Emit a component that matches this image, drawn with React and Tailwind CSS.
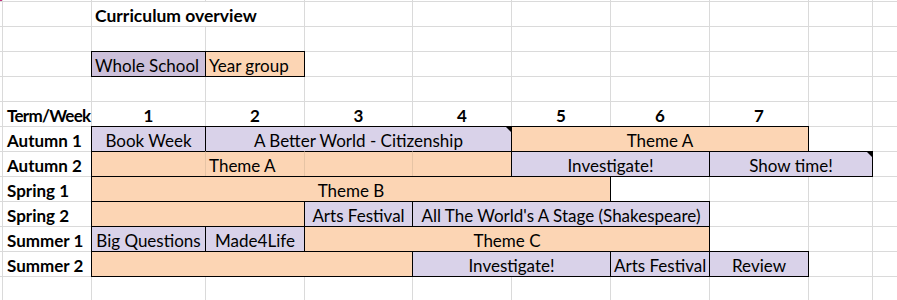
import React from "react";

const SPAN = {
  1: "",
  2: "col-span-2",
  3: "col-span-3",
  4: "col-span-4",
  5: "col-span-5",
};

const FILL = {
  p: "bg-[#fcd5b4]",
  u: "bg-[#d9d2e9]",
  w: "bg-[#ccc0da]",
};

const ALIGN = {
  c: "justify-center",
  l: "justify-start pl-[3px]",
  r: "justify-end",
};

function Cell({ span = 1, fill, align = "l", bold, text, tri, extra = "" }) {
  const filled = !!fill;
  const cls = [
    "flex items-end pb-[2px] leading-none whitespace-nowrap min-w-0",
    SPAN[span],
    filled ? "relative -m-px border border-black" : "bg-white",
    filled ? FILL[fill] : "",
    ALIGN[align],
    bold ? "font-bold" : "",
    extra,
  ].join(" ");
  return (
    <div className={cls}>
      {text}
      {tri && (
        <span className="absolute top-0 right-0 w-0 h-0 border-l-[5px] border-l-transparent border-t-[5px] border-t-black" />
      )}
    </div>
  );
}

function Empty({ n = 1 }) {
  return Array.from({ length: n }).map((_, i) => <div key={i} className="bg-white" />);
}

function Label({ text, extra = "" }) {
  return (
    <div className={"flex items-end pb-[2px] pl-[4px] leading-none whitespace-nowrap bg-white font-bold " + extra}>
      {text}
    </div>
  );
}

export default function App() {
  return (
    <div className="w-[897px] h-[300px] overflow-hidden bg-white">
      <div className="grid grid-cols-[2px_88px_113px_98px_107px_98px_98px_98px_98px_63px_1fr] grid-rows-[1px_repeat(12,24px)] gap-px bg-[#dadada] text-[17px] text-black font-[family-name:Lato,sans-serif]">
        {/* row 0 */}
        <div className="bg-[#c2307e]" />
        <Empty n={10} />

        {/* row 1 */}
        <div className="bg-white" />
        <div className="bg-white" />
        <Cell span={2} bold text="Curriculum overview" extra="bg-white text-[17.5px]" />
        <Empty n={7} />

        {/* row 2 */}
        <Empty n={11} />

        {/* row 3 */}
        <Empty n={2} />
        <Cell fill="w" text="Whole School" />
        <Cell fill="p" text="Year group" />
        <Empty n={7} />

        {/* row 4 */}
        <Empty n={11} />

        {/* row 5 */}
        <div className="bg-white" />
        <Label text="Term/Week" extra="pl-[3px] tracking-[-0.7px]" />
        <Cell bold align="c" text="1" />
        <Cell bold align="c" text="2" />
        <Cell bold align="c" text="3" />
        <Cell bold align="c" text="4" />
        <Cell bold align="c" text="5" />
        <Cell bold align="c" text="6" />
        <Cell bold align="c" text="7" />
        <Empty n={2} />

        {/* Autumn 1 */}
        <div className="bg-white" />
        <Label text="Autumn 1" />
        <Cell fill="u" align="c" text="Book Week" />
        <Cell span={3} fill="u" align="c" text="A Better World - Citizenship" tri />
        <Cell span={3} fill="p" align="c" text="Theme A" />
        <Empty n={2} />

        {/* Autumn 2 */}
        <div className="bg-white" />
        <Label text="Autumn 2" />
        <Cell fill="p" extra="border-r-[#e6c4a5]" />
        <Cell fill="p" text="Theme A" extra="border-x-[#e6c4a5]" />
        <Cell fill="p" extra="border-x-[#e6c4a5]" />
        <Cell fill="p" extra="border-l-[#e6c4a5]" />
        <Cell span={2} fill="u" align="c" text="Investigate!" />
        <Cell span={2} fill="u" align="c" text="Show time!" tri />
        <Empty n={1} />

        {/* Spring 1 */}
        <div className="bg-white" />
        <Label text="Spring 1" />
        <Cell span={5} fill="p" align="c" text="Theme B" />
        <Empty n={4} />

        {/* Spring 2 */}
        <div className="bg-white" />
        <Label text="Spring 2" />
        <Cell span={2} fill="p" />
        <Cell fill="u" align="c" text="Arts Festival" />
        <Cell span={3} fill="u" align="c" text="All The World's A Stage (Shakespeare)" />
        <Empty n={3} />

        {/* Summer 1 */}
        <div className="bg-white" />
        <Label text="Summer 1" />
        <Cell fill="u" align="c" text="Big Questions" />
        <Cell fill="u" align="c" text="Made4Life" />
        <Cell span={4} fill="p" align="c" text="Theme C" />
        <Empty n={3} />

        {/* Summer 2 */}
        <div className="bg-white" />
        <Label text="Summer 2" />
        <Cell span={3} fill="p" />
        <Cell span={2} fill="u" align="c" text="Investigate!" />
        <Cell fill="u" text="Arts Festival" extra="pl-[2px]" />
        <Cell fill="u" align="c" text="Review" />
        <Empty n={2} />

        {/* row 12 */}
        <Empty n={11} />
      </div>
    </div>
  );
}
